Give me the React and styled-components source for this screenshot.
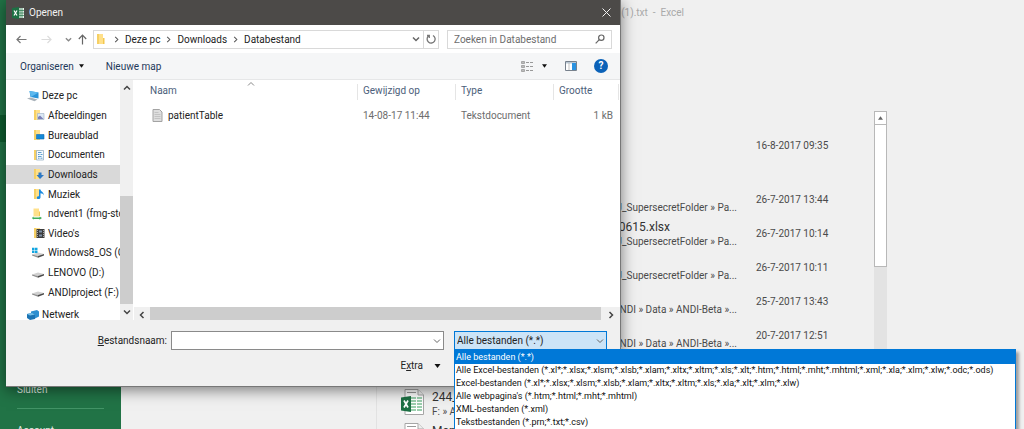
import React from "react";
import styled, { createGlobalStyle } from "styled-components";

const Global = createGlobalStyle`
  * { box-sizing: border-box; }
  body {
    margin: 0;
    overflow: hidden;
    background: #f0f0f0;
    font-family: Roboto, "Open Sans", sans-serif;
    font-size: 10px;
    line-height: 13px;
    color: #222;
  }
  button, input, select { font: inherit; color: inherit; }
  ul { list-style: none; margin: 0; padding: 0; }
  svg { flex: none; }
`;

/* ---------- Excel backstage ---------- */

const Page = styled.div`
  position: relative;
  display: flex;
  height: 100vh;
  overflow: hidden;
`;

const Nav = styled.nav`
  flex: none;
  width: 121px;
  padding-top: 115px;
  background: #217346;
  color: #e4efe8;
`;

const NavCurrent = styled.div`
  height: 27px;
  margin-bottom: 228px;
  background: #0e5c2f;
`;

const NavLink = styled.a`
  display: flex;
  align-items: center;
  height: 38px;
  padding-left: 17px;
  color: inherit;
  text-decoration: none;
`;

const NavRule = styled.hr`
  margin: 0 17px 2px;
  border: 0;
  border-top: 1px solid #439467;
`;

const Stage = styled.main`
  flex: 1;
  display: flex;
  flex-direction: column;
  min-width: 0;
`;

const DocTitle = styled.header`
  height: 111px;
  padding: 6px 340px 0 0;
  text-align: right;
  white-space: pre;
  color: #a9a9a9;
`;

const Recent = styled.div`
  flex: 1;
  display: flex;
  min-height: 0;
  margin: 0 137px 0 255px;
  border-left: 1px solid #e2e2e2;
`;

const Files = styled.ul`
  flex: 1;
  min-width: 0;
  padding: 18px 0 0 24px;
`;

const FileItem = styled.li`
  display: grid;
  grid-template-columns: 31px minmax(0, 1fr) 137px;
  height: 34px;
  margin-bottom: ${(p) => (p.$last ? 20 : 0)}px;
  color: #4a4a4a;
`;

const FileIcon = styled.span`
  padding-top: 2px;
`;

const FileText = styled.div`
  display: flex;
  flex-direction: column;
  padding-top: 2px;
  white-space: nowrap;
`;

const FileTitle = styled.span`
  height: 16px;
  margin-right: 67px;
  align-self: ${(p) => (p.$long ? "flex-end" : "flex-start")};
  font-size: 12px;
  line-height: 16px;
  color: #333;
`;

const FilePath = styled.span`
  line-height: 14px;
  align-self: ${(p) => (p.$long ? "flex-end" : "flex-start")};
`;

const FileDate = styled.time`
  padding: 10px 0 0 19px;
  white-space: nowrap;
`;

const StageScroll = styled.div`
  flex: none;
  width: 13px;
  background: #e3e3e3;
`;

const StageUp = styled.button`
  display: flex;
  align-items: center;
  justify-content: center;
  width: 100%;
  height: 14px;
  padding: 0;
  border: 1px solid #b8b8b8;
  background: #fff;
`;

const StageThumb = styled.div`
  height: 142px;
  border: 1px solid #b8b8b8;
  border-top: 0;
  background: #fff;
`;

/* ---------- Open dialog ---------- */

const Dialog = styled.section`
  position: absolute;
  top: 0;
  left: 6px;
  right: 403px;
  display: flex;
  flex-direction: column;
  background: #f0f0f0;
  border-right: 1px solid #777;
  border-bottom: 1px solid #777;
  box-shadow: 0 3px 14px rgba(0, 0, 0, 0.5);
`;

const TitleBar = styled.header`
  display: flex;
  align-items: center;
  gap: 4px;
  height: 25px;
  padding: 0 8px 0 6px;
  background: #4c4a48;
  color: #f2f2f2;
`;

const DialogTitle = styled.h1`
  flex: 1;
  margin: 0;
  font-size: 10px;
  font-weight: 400;
`;

const IconButton = styled.button`
  display: flex;
  align-items: center;
  justify-content: center;
  flex: none;
  width: ${(p) => p.$w || 12}px;
  height: 16px;
  padding: 0;
  border: 0;
  background: none;
`;

const AddressRow = styled.div`
  display: flex;
  align-items: center;
  height: 28px;
  padding: 0 8px 0 9px;
  background: #fff;
`;

const NavButtons = styled.div`
  display: flex;
  align-items: center;
  width: 78px;
`;

const Address = styled.div`
  flex: 1;
  display: flex;
  align-items: center;
  height: 19px;
  border: 1px solid #d9d9d9;
  min-width: 0;
  padding-left: 2px;
`;

const Crumbs = styled.ol`
  flex: 1;
  display: flex;
  margin: 0 0 0 5px;
  padding: 0;
  list-style: none;
`;

const Crumb = styled.li`
  display: flex;
  align-items: center;
  gap: 5px;
  margin-right: 5px;
  a { color: #222; text-decoration: none; }
`;

const Reload = styled.div`
  display: flex;
  align-items: center;
  justify-content: center;
  align-self: stretch;
  width: 15px;
  border-left: 1px solid #d9d9d9;
`;

const Search = styled.label`
  display: flex;
  align-items: center;
  width: 165px;
  height: 19px;
  margin-left: 8px;
  padding: 0 6px;
  border: 1px solid #d9d9d9;
`;

const PlainInput = styled.input`
  flex: 1;
  min-width: 0;
  height: 16px;
  padding: 0;
  border: 0;
  outline: 0;
  background: none;
  &::placeholder { color: #6d6d6d; opacity: 1; }
`;

const Toolbar = styled.div`
  display: flex;
  align-items: center;
  height: 27px;
  padding: 0 12px 0 14px;
  background: #f5f6f7;
  border-bottom: 1px solid #e6e7e8;
`;

const ToolButton = styled.button`
  display: flex;
  align-items: center;
  gap: 5px;
  margin-right: 22px;
  padding: 0;
  border: 0;
  background: none;
  color: #1e395b;
`;

const ToolIcons = styled.div`
  display: flex;
  align-items: center;
  gap: 8px;
  margin-left: auto;
`;

const Help = styled.button`
  width: 14px;
  height: 14px;
  margin-left: 7px;
  padding: 0;
  border: 0;
  border-radius: 50%;
  background: #0b62b8;
  color: #fff;
  font-weight: 700;
  line-height: 14px;
`;

const Body = styled.div`
  display: flex;
  height: 240px;
`;

const Tree = styled.ul`
  flex: none;
  display: flex;
  flex-direction: column;
  width: 114px;
  padding-top: 6px;
  overflow: hidden;
  background: #fff;
`;

const Branch = styled.ul`
  flex: none;
  display: flex;
  flex-direction: column;
  height: 216px;
`;

const TreeItem = styled.li`
  flex: 1;
  display: flex;
  align-items: center;
  gap: ${(p) => (p.$drive ? 4 : 3)}px;
  padding-left: ${(p) => (p.$root ? 21 : p.$drive ? 26 : 27)}px;
  padding-top: ${(p) => (p.$gap ? 6 : 0)}px;
  background: ${(p) => (p.$selected ? "#d9d9d9" : "transparent")};
  white-space: nowrap;
`;

const VScroll = styled.div`
  flex: none;
  display: flex;
  flex-direction: column;
  align-items: center;
  width: 13px;
  background: #f0f0f0;
`;

const VThumb = styled.div`
  width: 13px;
  height: 108px;
  margin-top: auto;
  background: #cdcdcd;
`;

const Listing = styled.div`
  flex: 1;
  display: flex;
  flex-direction: column;
  border-left: 1px solid #fff;
  background: #fff;
`;

const SortMark = styled.div`
  display: flex;
  justify-content: center;
  width: 223px;
  height: 4px;
  padding-left: 10px;
`;

const FileTable = styled.table`
  width: 100%;
  border-right: 1px solid #fff;
  table-layout: fixed;
  border-collapse: separate;
  border-spacing: 0;
`;

const Th = styled.th`
  width: ${(p) => (p.$w ? p.$w + "px" : "auto")};
  height: 16px;
  padding: 0 0 3px ${(p) => p.$pad || 5}px;
  border-right: 1px solid #e5e5e5;
  text-align: left;
  font-weight: 400;
  color: #4c607a;
`;

const Td = styled.td`
  height: 30px;
  padding: 0 ${(p) => (p.$right ? 6 : 0)}px 0 ${(p) => p.$pad || 5}px;
  text-align: ${(p) => (p.$right ? "right" : "left")};
  color: ${(p) => (p.$strong ? "#222" : "#6d6d6d")};
`;

const NameCell = styled.span`
  display: flex;
  align-items: center;
  gap: 5px;
`;

const HScroll = styled.div`
  display: flex;
  align-items: stretch;
  height: 13px;
  margin-top: auto;
  background: #f0f0f0;
`;

const HThumb = styled.div`
  flex: 1;
  background: #cdcdcd;
`;

const Footer = styled.footer`
  display: flex;
  flex-direction: column;
  height: 66px;
  padding: 11px 13px 0 0;
`;

const FieldRow = styled.div`
  display: flex;
  align-items: center;
`;

const FieldLabel = styled.label`
  width: 165px;
  padding-right: 4px;
  text-align: right;
`;

const Combo = styled.div`
  flex: ${(p) => (p.$grow ? "1" : "none")};
  display: flex;
  align-items: center;
  position: relative;
  width: ${(p) => (p.$grow ? "auto" : "153px")};
  height: 19px;
  margin-left: ${(p) => (p.$grow ? 0 : 10)}px;
  padding: 0 2px;
  border: 1px solid ${(p) => (p.$open ? "#0078d7" : "#8a8a8a")};
  background: ${(p) => (p.$open ? "#cce4f7" : "#fff")};
`;

const Select = styled.select`
  flex: 1;
  min-width: 0;
  height: 17px;
  padding: 0;
  border: 0;
  outline: 0;
  appearance: none;
  background: none;
`;

const Options = styled.ul`
  position: absolute;
  top: 17px;
  left: -1px;
  width: 562px;
  padding: 1px 0 26px;
  border: 1px solid #0078d7;
  background: linear-gradient(#0078d7 1px, #fff 1px);
  box-shadow: 3px 3px 3px rgba(0, 0, 0, 0.35);
  font-size: 9px;
`;

const Option = styled.li`
  padding-left: 1px;
  white-space: nowrap;
  background: ${(p) => (p.$active ? "#0078d7" : "transparent")};
  color: ${(p) => (p.$active ? "#fff" : "#111")};
`;

const ExtraButton = styled.button`
  display: flex;
  align-items: center;
  align-self: flex-end;
  gap: 11px;
  margin: 9px 166px 0 0;
  padding: 0;
  border: 0;
  background: none;
`;

/* ---------- Icons ---------- */

const Chevron = ({ dir = "down", size = 8, color = "#444", w = 1.2 }) => {
  const d = {
    down: "M1 2.5 4 5.5 7 2.5",
    up: "M1 5.5 4 2.5 7 5.5",
    left: "M5.5 1 2.5 4 5.5 7",
    right: "M2.5 1 5.5 4 2.5 7",
  }[dir];
  return (
    <svg width={size} height={size} viewBox="0 0 8 8" fill="none" stroke={color} strokeWidth={w} aria-hidden="true">
      <path d={d} />
    </svg>
  );
};

const Caret = ({ w = 5, up }) => (
  <svg width={w} height="4" viewBox="0 0 6 4" aria-hidden="true">
    <path d={up ? "M0 4 3 0 6 4z" : "M0 0h6L3 4z"} fill={up ? "#666" : "#111"} />
  </svg>
);

const Arrow = ({ dir, color }) => (
  <svg width="11" height="11" viewBox="0 0 11 11" fill="none" stroke={color} strokeWidth="1.2" aria-hidden="true">
    <path
      d={{ left: "M10.5 5.5H1M4.5 2 1 5.5 4.5 9", right: "M.5 5.5H10M6.5 2 10 5.5 6.5 9", up: "M5.5 10.5V1.2M1.8 5 5.5 1.2 9.2 5" }[dir]}
    />
  </svg>
);

const ExcelMark = () => (
  <svg width="13" height="12" viewBox="0 0 13 12" aria-hidden="true">
    <path d="M7 1h5v10H7z" fill="#e9f3ec" />
    <path d="M8 1v10M10 1v10M7 3.5h5M7 6h5M7 8.5h5" stroke="#217346" strokeWidth=".7" />
    <path d="M0 1 7 0v12L0 11z" fill="#1d7044" />
    <path d="M2 3.5 5 8.5M5 3.5 2 8.5" stroke="#fff" strokeWidth="1.2" />
  </svg>
);

const FolderBase = () => (
  <>
    <path d="M1 1h6v10H1z" fill="#ffe08a" />
    <path d="M1 1h2v10H1z" fill="#f6d064" />
  </>
);

const overlays = {
  folder: <path d="M7 5h1.500v6H7z" fill="#f3c84f" />,
  pictures: (
    <>
      <path d="M4.500 4.500h6.500v6H4.500z" fill="#dce9f5" stroke="#9aaec4" strokeWidth=".6" />
      <path d="M5 10V8l2-1.500L10.500 10z" fill="#7c80b8" />
    </>
  ),
  desktop: <path d="M3.500 5.500h7.500v4.500H3.500z" fill="#1489d8" stroke="#0b6cb3" strokeWidth=".6" />,
  documents: (
    <>
      <path d="M3.500 1.500h7v9.500h-7z" fill="#f5fafd" stroke="#8aa6bd" strokeWidth=".7" />
      <path d="M5 3.500h3.500M5 5.500h1.500M7.500 5.500h2M5 7.500h3.500M5 9.200h1.500M7.500 9.200h2" stroke="#4b93c9" strokeWidth=".9" />
    </>
  ),
  downloads: <path d="M5.500 4.500h3v2.500h2.500L7 11 3.500 7h2z" fill="#2d78c4" />,
  music: (
    <path d="M6 1.500h1.500c.3 2.200 3.700 2.800 3.300 6-.3-1.500-1.600-2.200-3.300-2.300V9.500C7.200 11.500 3.600 11.600 3.700 9.800 3.800 8.300 5.400 8 6 8.200z" fill="#1a8be0" />
  ),
  video: (
    <>
      <path d="M3.500 2h8v9h-8z" fill="#3c3c3c" />
      <path d="M4.500 3v7.500M10.500 3v7.500" stroke="#d5d5d5" strokeWidth=".7" strokeDasharray="1 1" />
      <path d="M6 3.500h3v2H6zM6 7.500h3v2H6z" fill="#7c8fa6" />
    </>
  ),
};

const Drive = () => (
  <>
    <path d="M0 7.500 6 5.500l6 1.500L6 9z" fill="#d0d0d0" />
    <path d="M0 7.500v1L6 10.800V9z" fill="#8d8d8d" />
    <path d="M6 9v1.800L12 8.500V7z" fill="#4b4b4b" />
  </>
);

const PlaceIcon = ({ kind }) => (
  <svg width="12" height="12" viewBox="0 0 12 12" aria-hidden="true">
    {kind === "pc" && (
      <>
        <path d="M2.500 1 11.500 2.500V8.500L3.500 7z" fill="#2b93d8" />
        <path d="M2.500 1 11.500 2.500 4 7z" fill="#5cb8ee" />
        <path d="M0 8.500 3.500 7.500l7 2-3 1.800z" fill="#a9b2ba" />
      </>
    )}
    {kind === "net" && (
      <>
        <path d="M4 2.500 10 1l2 1.500v5L7 10 4 8z" fill="#2c8fd0" />
        <path d="M0 5 5 4l3 1.500V10l-5 1-3-2z" fill="#1b74b4" />
        <path d="M0 5 5 4l3 1.500-5 1z" fill="#73c0ea" />
      </>
    )}
    {kind === "share" && (
      <>
        <path d="M1.500.5h5.500v8H1.500z" fill="#ffe08a" />
        <path d="M7 3.500h1V8H7z" fill="#f3c84f" />
        <path d="M0 10 1.500 8.500v1h6V8.500L10 10 7.500 11.800v-.8h-6v.8z" fill="#3fae5a" />
      </>
    )}
    {kind === "drive" && <Drive />}
    {kind === "os" && (
      <>
        <Drive />
        <path d="M0 .8h2.500v2.400H0zM3 .8h2.500v2.400H3zM0 3.700h2.500v2.400H0zM3 3.700h2.500v2.400H3z" fill="#12a5e0" />
      </>
    )}
    {overlays[kind] && (
      <>
        <FolderBase />
        {overlays[kind]}
      </>
    )}
  </svg>
);

const ExcelFileIcon = () => (
  <svg width="24" height="26" viewBox="0 0 24 26" aria-hidden="true">
    <path d="M4 .5h13l5.500 5.500v19.500H4z" fill="#fff" stroke="#a6a6a6" />
    <path d="M17 .5V6h5.500" fill="#eee" stroke="#a6a6a6" />
    <path d="M6 3.500h9" stroke="#999" />
    <path d="M10 8h5v2h-5zM16 8h5v2h-5zM10 11h5v2h-5zM16 11h5v2h-5zM10 14h5v2h-5zM16 14h5v2h-5zM10 17h5v2h-5zM16 17h5v2h-5zM6 20h9v2H6zM16 20h5v2h-5z" fill="#9bcfae" />
    <path d="M0 8.500 10 7v16L0 21.500z" fill="#1d7044" />
    <path d="m3 11.500 4 7m0-7-4 7" stroke="#fff" strokeWidth="1.700" />
  </svg>
);

const TextFileIcon = () => (
  <svg width="11" height="13" viewBox="0 0 11 13" aria-hidden="true">
    <path d="M1 .5h6.500l2.500 2.500v9.500H1z" fill="#dedede" stroke="#a3a3a3" />
    <path d="M2.500 3.500h4M2.500 5.500h6M2.500 7.500h6M2.500 9.500h6" stroke="#bdbdbd" strokeWidth=".8" />
  </svg>
);

/* ---------- Data ---------- */

const folder = "&J_SupersecretFolder » Pa...";
const beta = "NDI » Data » ANDI-Beta »...";

const recent = [
  { date: "16-8-2017 09:35", last: true },
  { path: folder, long: true, date: "26-7-2017 13:44" },
  { title: "70615.xlsx", path: folder, long: true, date: "26-7-2017 10:14" },
  { path: folder, long: true, date: "26-7-2017 10:11" },
  { path: beta, long: true, date: "25-7-2017 13:43" },
  { path: beta, long: true, date: "20-7-2017 12:51" },
  {},
  { title: "244_", path: "F: » A", icon: true },
  { title: "Map", icon: true },
];

const places = [
  ["pc", "Deze pc"],
  ["pictures", "Afbeeldingen"],
  ["desktop", "Bureaublad"],
  ["documents", "Documenten"],
  ["downloads", "Downloads"],
  ["music", "Muziek"],
  ["share", "ndvent1 (fmg-storage)"],
  ["video", "Video's"],
  ["os", "Windows8_OS (C:)"],
  ["drive", "LENOVO (D:)"],
  ["drive", "ANDIproject (F:)"],
];

const types = [
  "Alle bestanden (*.*)",
  "Alle Excel-bestanden (*.xl*;*.xlsx;*.xlsm;*.xlsb;*.xlam;*.xltx;*.xltm;*.xls;*.xlt;*.htm;*.html;*.mht;*.mhtml;*.xml;*.xla;*.xlm;*.xlw;*.odc;*.ods)",
  "Excel-bestanden (*.xl*;*.xlsx;*.xlsm;*.xlsb;*.xlam;*.xltx;*.xltm;*.xls;*.xla;*.xlt;*.xlm;*.xlw)",
  "Alle webpagina's (*.htm;*.html;*.mht;*.mhtml)",
  "XML-bestanden (*.xml)",
  "Tekstbestanden (*.prn;*.txt;*.csv)",
];

/* ---------- Screen ---------- */

const Backstage = () => (
  <>
    <Nav>
      <NavCurrent />
      <NavLink href="#sluiten">Sluiten</NavLink>
      <NavRule />
      <NavLink href="#account">Account</NavLink>
    </Nav>
    <Stage>
      <DocTitle>(1).txt  -  Excel</DocTitle>
      <Recent>
        <Files>
          {recent.map((f, i) => (
            <FileItem key={i} $last={f.last}>
              <FileIcon>{f.icon && <ExcelFileIcon />}</FileIcon>
              <FileText>
                <FileTitle $long={f.long}>{f.title}</FileTitle>
                <FilePath $long={f.long}>{f.path}</FilePath>
              </FileText>
              <FileDate>{f.date}</FileDate>
            </FileItem>
          ))}
        </Files>
        <StageScroll>
          <StageUp aria-label="Omhoog"><Caret up /></StageUp>
          <StageThumb />
        </StageScroll>
      </Recent>
    </Stage>
  </>
);

export default function App() {
  return (
    <Page>
      <Global />
      <Backstage />
      <Dialog role="dialog" aria-label="Openen">
        <TitleBar>
          <ExcelMark />
          <DialogTitle>Openen</DialogTitle>
          <IconButton aria-label="Sluiten">
            <svg width="9" height="9" viewBox="0 0 9 9" stroke="#f2f2f2" strokeWidth="1"><path d="M.5.5l8 8M8.500.5l-8 8" /></svg>
          </IconButton>
        </TitleBar>
        <AddressRow>
          <NavButtons>
            <IconButton aria-label="Vorige" $w={13}><Arrow dir="left" color="#777" /></IconButton>
            <IconButton aria-label="Volgende" $w={36}><Arrow dir="right" color="#dcdcdc" /></IconButton>
            <IconButton aria-label="Recente locaties" $w={8}><Chevron size={7} color="#888" w={1.5} /></IconButton>
            <IconButton aria-label="Omhoog" $w={21}><Arrow dir="up" color="#666" /></IconButton>
          </NavButtons>
          <Address>
            <PlaceIcon kind="folder" />
            <Crumbs>
              {["Deze pc", "Downloads", "Databestand"].map((c) => (
                <Crumb key={c}>
                  <Chevron dir="right" size={7} color="#555" />
                  <a href="#map">{c}</a>
                </Crumb>
              ))}
            </Crumbs>
            <IconButton aria-label="Vorige locaties" $w={14}><Chevron color="#666" w={1.5} /></IconButton>
            <Reload>
              <IconButton aria-label="Vernieuwen">
                <svg width="10" height="10" viewBox="0 0 10 10" fill="none" stroke="#777" strokeWidth="1.300">
                  <path d="M7 1.500A4 4 0 1 1 2.500 2M1 1.500h2.300V4" />
                </svg>
              </IconButton>
            </Reload>
          </Address>
          <Search>
            <PlainInput aria-label="Zoeken" placeholder="Zoeken in Databestand" />
            <svg width="10" height="10" viewBox="0 0 10 10" fill="none" stroke="#666" strokeWidth="1.200">
              <circle cx="6.300" cy="3.700" r="2.700" /><path d="M4.300 5.700.7 9.300" />
            </svg>
          </Search>
        </AddressRow>
        <Toolbar>
          <ToolButton>Organiseren <Caret /></ToolButton>
          <ToolButton>Nieuwe map</ToolButton>
          <ToolIcons>
            <IconButton aria-label="Weergave" $w={13}>
              <svg width="13" height="11" viewBox="0 0 13 11">
                <path d="M.5.5h3v2h-3zM.5 4.500h3v2h-3zM.5 8.500h3v2h-3z" fill="#bbb" stroke="#999" strokeWidth=".8" />
                <path d="M5 1.500h3M9 1.500h3M5 5.500h3M9 5.500h3M5 9.500h3M9 9.500h3" stroke="#999" />
              </svg>
            </IconButton>
            <IconButton aria-label="Meer opties" $w={5}><Caret /></IconButton>
            <IconButton aria-label="Voorbeeld" $w={32}>
              <svg width="12" height="10" viewBox="0 0 12 10">
                <path d="M.5.5h11v9H.5z" fill="#fff" stroke="#77818c" />
                <path d="M1 1h10v1.500H1z" fill="#b9c6d2" /><path d="M4 2v7" stroke="#aaa" strokeWidth=".7" />
                <path d="M7 2h4v7H7z" fill="#2a92e0" />
              </svg>
            </IconButton>
          </ToolIcons>
          <Help aria-label="Help">?</Help>
        </Toolbar>
        <Body>
          <Tree>
            <Branch>
              {places.map(([kind, name]) => (
                <TreeItem
                  key={name}
                  $root={kind === "pc"}
                  $drive={["share", "os", "drive"].includes(kind)}
                  $selected={name === "Downloads"}
                >
                  <PlaceIcon kind={kind} />
                  {name}
                </TreeItem>
              ))}
            </Branch>
            <TreeItem $root $gap><PlaceIcon kind="net" />Netwerk</TreeItem>
          </Tree>
          <VScroll>
            <IconButton aria-label="Omhoog"><Chevron dir="up" w={1.5} /></IconButton>
            <VThumb />
            <IconButton aria-label="Omlaag"><Chevron w={1.5} /></IconButton>
          </VScroll>
          <Listing>
            <SortMark><Chevron dir="up" color="#888" w={1} /></SortMark>
            <FileTable>
              <thead>
                <tr>
                  <Th $pad={16}>Naam</Th>
                  <Th $w={98}>Gewijzigd op</Th>
                  <Th $w={98}>Type</Th>
                  <Th $w={65}>Grootte</Th>
                </tr>
              </thead>
              <tbody>
                <tr>
                  <Td $pad={18} $strong><NameCell><TextFileIcon />patientTable</NameCell></Td>
                  <Td>14-08-17 11:44</Td>
                  <Td>Tekstdocument</Td>
                  <Td $right>1 kB</Td>
                </tr>
              </tbody>
            </FileTable>
            <HScroll>
              <IconButton aria-label="Links" $w={16}><Chevron dir="left" w={1.5} /></IconButton>
              <HThumb />
              <IconButton aria-label="Rechts" $w={19}><Chevron dir="right" w={1.5} /></IconButton>
            </HScroll>
          </Listing>
        </Body>
        <Footer>
          <FieldRow>
            <FieldLabel htmlFor="bestandsnaam"><u>B</u>estandsnaam:</FieldLabel>
            <Combo $grow>
              <PlainInput id="bestandsnaam" />
              <Chevron color="#666" w={1} />
            </Combo>
            <Combo $open>
              <Select aria-label="Bestandstype" defaultValue={types[0]}>
                {types.map((t) => <option key={t}>{t}</option>)}
              </Select>
              <Chevron color="#666" w={1} />
              <Options role="listbox" aria-label="Bestandstypen">
                {types.map((t, i) => (
                  <Option key={t} role="option" aria-selected={i === 0} $active={i === 0}>{t}</Option>
                ))}
              </Options>
            </Combo>
          </FieldRow>
          <ExtraButton><span>E<u>x</u>tra</span> <Caret w={7} /></ExtraButton>
        </Footer>
      </Dialog>
    </Page>
  );
}
